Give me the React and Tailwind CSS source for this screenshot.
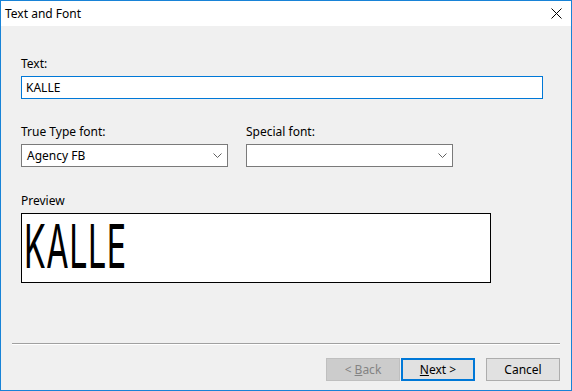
import React from "react";

function Chevron() {
  return (
    <svg width="9" height="5" viewBox="0 0 9 5" className="shrink-0">
      <path d="M0.5 0.5 L4.5 4.5 L8.5 0.5" fill="none" stroke="#606060" strokeWidth="1" />
    </svg>
  );
}

function Select({ value }) {
  return (
    <div className="w-[207px] h-[23px] bg-white border border-[#7a7a7a] flex items-center justify-between pl-[5px] pr-[5px]">
      <span>{value}</span>
      <Chevron />
    </div>
  );
}

function Button({ children, variant }) {
  const cls =
    variant === "disabled"
      ? "bg-[#cccccc] border border-[#bfbfbf] text-[#838383]"
      : variant === "default"
      ? "bg-[#e1e1e1] border-2 border-[#0078d7] text-black"
      : "bg-[#e1e1e1] border border-[#adadad] text-black";
  return (
    <div className={`w-[74px] h-[23px] flex items-center justify-center ${cls}`}>
      {children}
    </div>
  );
}

export default function App() {
  return (
    <div
      className="w-[572px] h-[391px] border border-[#1883d7] flex flex-col text-[12px] leading-[16px] text-black"
      style={{ fontFamily: '"Noto Sans", "Open Sans", sans-serif' }}
    >
      {/* Title bar */}
      <div className="h-[25px] bg-white flex items-center justify-between pl-[4px] pr-[9px] shrink-0">
        <span>Text and Font</span>
        <svg width="11" height="11" viewBox="0 0 11 11">
          <path d="M0.5 0.5 L10.5 10.5 M10.5 0.5 L0.5 10.5" stroke="#000" strokeWidth="1" />
        </svg>
      </div>

      {/* Body */}
      <div className="flex-1 bg-[#f0f0f0] flex flex-col">
        <div className="px-[20px] flex flex-col">
          <div className="mt-[30px]">Text:</div>
          <div className="mt-[4px] w-[522px] h-[23px] bg-white border border-[#0078d7] flex items-center pl-[4px]">
            KALLE
          </div>

          <div className="mt-[25px] flex gap-[18px]">
            <div className="flex flex-col gap-[4px]">
              <span>True Type font:</span>
              <Select value="Agency FB" />
            </div>
            <div className="flex flex-col gap-[4px]">
              <span>Special font:</span>
              <Select value="" />
            </div>
          </div>

          <div className="mt-[26px]">Preview</div>
          <div className="mt-[4px] w-[470px] h-[70px] bg-white border border-black">
            <div
              className="w-[200px] origin-left scale-x-[0.53] text-[61px] leading-[64px] font-normal pl-[4px] tracking-[1px]"
              style={{ fontFamily: "Inter, sans-serif" }}
            >
              KALLE
            </div>
          </div>
        </div>

        <div className="mt-auto mx-[11px] border-t border-[#a0a0a0] border-b border-b-white" />

        <div className="flex justify-end items-center px-[11px] pt-[13px] pb-[9px]">
          <Button variant="disabled">
            &lt; <span className="underline ml-[3px]">B</span>ack
          </Button>
          <div className="ml-[1px]">
            <Button variant="default">
              <span className="underline">N</span>ext &gt;
            </Button>
          </div>
          <div className="ml-[11px]">
            <Button>Cancel</Button>
          </div>
        </div>
      </div>
    </div>
  );
}
